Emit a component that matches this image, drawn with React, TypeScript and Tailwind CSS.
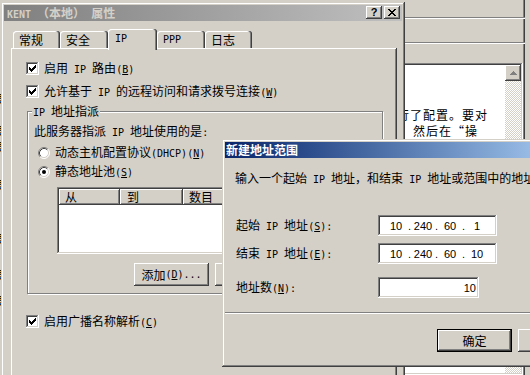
import React from 'react';

// classic 3D edges
const WIN = 'shadow-[inset_-1px_-1px_#404040,inset_1px_1px_#d4d0c8,inset_-2px_-2px_#808080,inset_2px_2px_#ffffff]';
const BTN = 'shadow-[inset_-1px_-1px_#404040,inset_1px_1px_#ffffff,inset_-2px_-2px_#808080]';
const SUNKEN = 'shadow-[inset_-1px_-1px_#ffffff,inset_1px_1px_#808080,inset_-2px_-2px_#d4d0c8,inset_2px_2px_#404040]';
const TAB = 'shadow-[inset_-1px_0_#404040,inset_-2px_0_#808080,inset_1px_1px_#ffffff]';

const CHECK = ['......#', '.....##', '#...###', '##.###.', '#####..', '.###...', '..#....'];
const CLOSE = ['##....##', '.##..##.', '..####..', '...##...', '..####..', '.##..##.', '##....##'];
const UP = ['...#...', '..###..', '.#####.', '#######'];

function Pixels({ rows, color }: { rows: string[]; color: string }) {
  const w = rows[0].length;
  const h = rows.length;
  return (
    <svg width={w} height={h} viewBox={`0 0 ${w} ${h}`} shapeRendering="crispEdges">
      {rows.flatMap((r, y) =>
        r.split('').map((c, x) =>
          c === '#' ? <rect key={`${x}-${y}`} x={x} y={y} width={1} height={1} fill={color} /> : null
        )
      )}
    </svg>
  );
}

// SimSun-ish mix: latin runs in a narrow mono, "&X" underlines the mnemonic
function Txt({ s }: { s: string }) {
  const parts = s.split(/([\x20-\x7e]+)/).filter(Boolean);
  return (
    <>
      {parts.map((p, i) => {
        if (!/^[\x20-\x7e]+$/.test(p)) return <span key={i}>{p}</span>;
        const pieces = p.split(/&(.)/);
        return (
          <span key={i} className="font-['DejaVu_Sans_Mono',monospace] text-[10px] whitespace-pre">
            {pieces.map((q, j) => (j % 2 === 1 ? <u key={j}>{q}</u> : q))}
          </span>
        );
      })}
    </>
  );
}

function Check() {
  return (
    <div className={`w-[13px] h-[13px] shrink-0 bg-white flex items-center justify-center ${SUNKEN}`}>
      <Pixels rows={CHECK} color="#000000" />
    </div>
  );
}

function Radio({ on }: { on?: boolean }) {
  return (
    <svg width="12" height="12" viewBox="0 0 12 12" className="shrink-0">
      <circle cx="6" cy="6" r="5" fill="#ffffff" />
      <path d="M2.11 9.89 A5.5 5.5 0 0 1 9.89 2.11" stroke="#808080" fill="none" />
      <path d="M9.89 2.11 A5.5 5.5 0 0 1 2.11 9.89" stroke="#ffffff" fill="none" />
      <path d="M2.82 9.18 A4.5 4.5 0 0 1 9.18 2.82" stroke="#404040" fill="none" />
      <path d="M9.18 2.82 A4.5 4.5 0 0 1 2.82 9.18" stroke="#d4d0c8" fill="none" />
      {on && <circle cx="6" cy="6" r="2" fill="#000000" />}
    </svg>
  );
}

function Button({ label, def }: { label: string; def?: boolean }) {
  return (
    <div
      className={`w-[75px] h-[23px] shrink-0 flex items-center justify-center whitespace-nowrap bg-[#d4d0c8] ${BTN} ${
        def ? 'border border-black' : ''
      }`}
    >
      <Txt s={label} />
    </div>
  );
}

function LeftBg() {
  return (
    <div className="absolute left-[-60px] top-0 w-[64px] h-[375px] bg-[#d4d0c8] text-right whitespace-nowrap leading-[14px]">
      <div className="mt-[92px]">目录</div>
      <div className="mt-[18px]">目录</div>
      <div className="mt-[2px]">目录</div>
      <div className="mt-[24px]">目录</div>
      <div className="mt-[40px]">目录</div>
      <div className="mt-[22px]">目录</div>
      <div className="mt-[12px]">目录</div>
    </div>
  );
}

function RightBg() {
  return (
    <div className="absolute left-[290px] top-0 w-[235px] h-[375px] bg-[#d4d0c8] flex flex-col shadow-[inset_-1px_0_#404040,inset_-2px_0_#808080]">
      <div className="mt-[17px] h-[1px] bg-[#808080]" />
      <div className="h-[1px] bg-white" />
      <div className="mt-[23px] h-[1px] bg-[#808080]" />
      <div className="h-[1px] bg-white" />
      <div className={`mt-[19px] ml-[4px] mr-[2px] flex-1 bg-white p-[2px] flex ${SUNKEN}`}>
        <div className="flex-1 pt-[42px] leading-[16px] tracking-[1px] whitespace-nowrap overflow-hidden">
          <div className="ml-[88px]">进行了配置。要对</div>
          <div className="ml-[104px]">，然后在“操</div>
        </div>
        <div className="w-[16px] flex flex-col">
          <div className={`h-[16px] bg-[#d4d0c8] flex items-center justify-center ${BTN}`}>
            <Pixels rows={UP} color="#808080" />
          </div>
          <div className="flex-1 bg-[image:repeating-conic-gradient(#d4d0c8_0%_25%,#ffffff_0%_50%)] bg-[length:2px_2px]" />
        </div>
      </div>
    </div>
  );
}

const TABS = [
  { t: '常规', w: 'w-[47px]' },
  { t: '安全', w: 'w-[48px]' },
  { t: 'IP', w: 'w-[49px]', sel: true },
  { t: 'PPP', w: 'w-[48px]' },
  { t: '日志', w: 'w-[47px]' },
];

function PropsDialog() {
  return (
    <div className={`absolute left-[1px] top-[2px] w-[404px] h-[420px] bg-[#d4d0c8] p-[3px] flex flex-col ${WIN}`}>
      <div className="h-[16px] shrink-0 flex items-start bg-linear-to-r from-[#808080] to-[#c0c0c0] pl-[3px] pr-[2px]">
        <div className="flex-1 font-bold text-[#d4d0c8] leading-[16px] whitespace-nowrap">
          <Txt s="KENT （本地） 属性" />
        </div>
        <div className="flex gap-[2px] pt-[1px]">
          <div className={`w-[16px] h-[13px] bg-[#d4d0c8] flex items-center justify-center ${BTN}`}>
            <span className="font-['Liberation_Sans',sans-serif] font-bold text-[11px] leading-none">?</span>
          </div>
          <div className={`w-[16px] h-[13px] bg-[#d4d0c8] flex items-center justify-center ${BTN}`}>
            <Pixels rows={CLOSE} color="#000000" />
          </div>
        </div>
      </div>

      {/* tabs */}
      <div className="ml-[9px] mt-[8px] h-[19px] shrink-0 flex items-end">
        {TABS.map((tab) =>
          tab.sel ? (
            <div
              key={tab.t}
              className={`relative z-10 h-[21px] -mb-[2px] pb-[2px] pl-[7px] flex items-center bg-[#d4d0c8] rounded-t-[3px] ${tab.w} ${TAB}`}
            >
              <Txt s={tab.t} />
            </div>
          ) : (
            <div
              key={tab.t}
              className={`h-[17px] pl-[6px] flex items-center bg-[#d4d0c8] rounded-t-[3px] ${tab.w} ${TAB}`}
            >
              <Txt s={tab.t} />
            </div>
          )
        )}
      </div>

      {/* tab page */}
      <div className={`ml-[7px] w-[386px] flex-1 pl-[15px] pt-[14px] flex flex-col items-start whitespace-nowrap ${BTN}`}>
        <div className="h-[13px] flex items-center gap-[5px]">
          <Check />
          <span>
            <Txt s="启用 IP 路由(&B)" />
          </span>
        </div>
        <div className="mt-[10px] h-[13px] flex items-center gap-[5px]">
          <Check />
          <span>
            <Txt s="允许基于 IP 的远程访问和请求拨号连接(&W)" />
          </span>
        </div>

        {/* group box */}
        <div className="mt-[13px] ml-[1px] w-[356px] h-[183px] shrink-0 border border-[#808080] shadow-[inset_1px_1px_#ffffff,1px_1px_#ffffff] flex flex-col items-start">
          <div className="-mt-[8px] ml-[4px] px-[1px] bg-[#d4d0c8] leading-[14px]">
            <Txt s="IP 地址指派" />
          </div>
          <div className="mt-[4px] ml-[6px]">
            <Txt s="此服务器指派 IP 地址使用的是:" />
          </div>
          <div className="mt-[7px] ml-[10px] h-[12px] flex items-center gap-[5px]">
            <Radio />
            <span>
              <Txt s="动态主机配置协议(DHCP)(&N)" />
            </span>
          </div>
          <div className="mt-[7px] ml-[10px] h-[12px] flex items-center gap-[5px]">
            <Radio on />
            <span>
              <Txt s="静态地址池(&S)" />
            </span>
          </div>
          <div className={`mt-[9px] ml-[29px] w-[314px] h-[67px] bg-white p-[2px] ${SUNKEN}`}>
            <div className="h-[16px] flex">
              <div className={`w-[61px] pl-[6px] flex items-center bg-[#d4d0c8] ${BTN}`}>从</div>
              <div className={`w-[63px] pl-[7px] flex items-center bg-[#d4d0c8] ${BTN}`}>到</div>
              <div className={`w-[63px] pl-[6px] flex items-center bg-[#d4d0c8] ${BTN}`}>数目</div>
              <div className={`flex-1 bg-[#d4d0c8] ${BTN}`} />
            </div>
          </div>
          <div className="mt-[9px] ml-[106px] flex gap-[6px]">
            <Button label="添加(&D)..." />
            <Button label="编辑(&E)..." />
            <Button label="删除(&R)" />
          </div>
        </div>

        <div className="mt-[21px] h-[13px] flex items-center gap-[5px]">
          <Check />
          <span>
            <Txt s="启用广播名称解析(&C)" />
          </span>
        </div>
      </div>
    </div>
  );
}

function IpField({ parts }: { parts: string[] }) {
  return (
    <div className={`w-[119px] h-[21px] bg-white pl-[7px] flex items-center font-['Liberation_Sans',sans-serif] text-[11px] ${SUNKEN}`}>
      {parts.map((p, i) => (
        <React.Fragment key={i}>
          {i > 0 && <span className="w-[5px] text-center">.</span>}
          <span className="w-[22px] text-center">{p}</span>
        </React.Fragment>
      ))}
    </div>
  );
}

function RangeDialog() {
  return (
    <div className={`absolute left-[222px] top-[139px] w-[340px] h-[228px] bg-[#d4d0c8] p-[3px] flex flex-col whitespace-nowrap ${WIN}`}>
      <div className="h-[16px] shrink-0 flex items-center bg-linear-to-r from-[#0a246a] to-[#a6caf0] pl-[1px]">
        <span className="font-bold text-white leading-[16px]">新建地址范围</span>
      </div>
      <div className="mt-[13px] pl-[10px] leading-[14px]">
        <Txt s="输入一个起始 IP 地址，和结束 IP 地址或范围中的地址数。" />
      </div>

      <div className="mt-[28px] pl-[11px] h-[21px] flex items-center">
        <div className="w-[142px]">
          <Txt s="起始 IP 地址(&S):" />
        </div>
        <IpField parts={['10', '240', '60', '1']} />
      </div>
      <div className="mt-[7px] pl-[11px] h-[21px] flex items-center">
        <div className="w-[142px]">
          <Txt s="结束 IP 地址(&E):" />
        </div>
        <IpField parts={['10', '240', '60', '10']} />
      </div>
      <div className="mt-[13px] pl-[11px] h-[21px] flex items-center">
        <div className="w-[142px]">
          <Txt s="地址数(&N):" />
        </div>
        <div className={`w-[101px] h-[21px] bg-white pr-[3px] flex items-center justify-end font-['Liberation_Sans',sans-serif] text-[11px] ${SUNKEN}`}>
          10
        </div>
      </div>

      <div className="mt-[14px] h-[1px] bg-[#808080]" />
      <div className="h-[1px] bg-white" />

      <div className="mt-[15px] pl-[212px] flex gap-[6px]">
        <Button label="确定" def />
        <Button label="取消" />
      </div>
    </div>
  );
}

export default function App() {
  return (
    <div className="relative w-[530px] h-[375px] overflow-hidden bg-[#d4d0c8] font-['Noto_Sans_CJK_SC',sans-serif] text-[12px] leading-[14px] text-black select-none">
      <LeftBg />
      <RightBg />
      <PropsDialog />
      <RangeDialog />
    </div>
  );
}
